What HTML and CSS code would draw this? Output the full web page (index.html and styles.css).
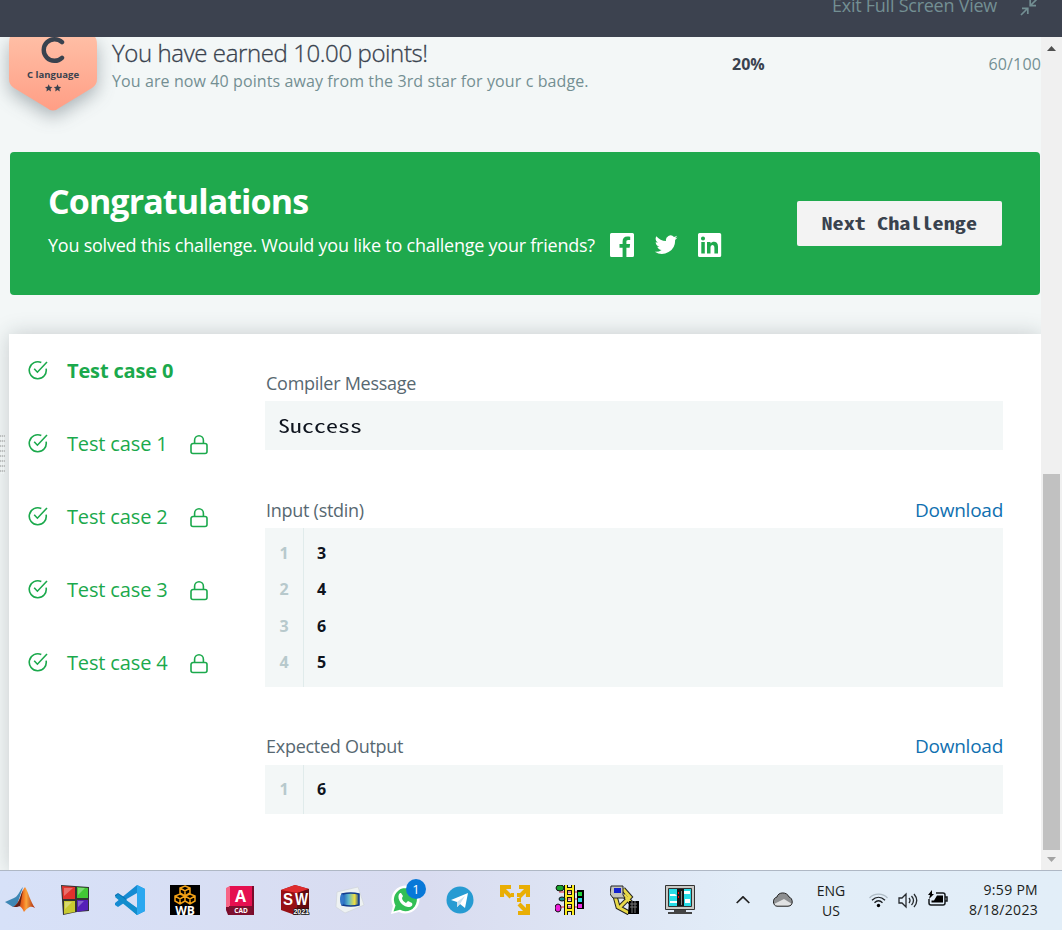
FILE: index.html
```html
<!DOCTYPE html>
<html lang="en">
<head>
<meta charset="utf-8">
<title>Challenge results</title>
<link rel="stylesheet" href="styles.css">
</head>
<body>
<svg class="defs" width="0" height="0">
  <symbol id="check" viewBox="0 0 20 20"><path d="M18.1 8.600A8.500 8.500 0 1 1 13.300 2.500M6.200 8.800l3.200 3.400L19 2" fill="none" stroke="currentColor" stroke-width="1.600"/></symbol>
  <symbol id="lock" viewBox="0 0 18 20"><path d="M4.600 8.500V5.200a4.400 4.400 0 0 1 8.800 0v3.300M3 8.500h12a2 2 0 0 1 2 2v6a2 2 0 0 1-2 2H3a2 2 0 0 1-2-2v-6a2 2 0 0 1 2-2z" fill="none" stroke="currentColor" stroke-width="1.600"/></symbol>
</svg>
<header class="topbar">
  <span class="exit">Exit Full Screen View</span>
  <svg class="shrink" width="18" height="18" viewBox="0 0 18 18"><path d="M1 17l6.500-6.500M2 10.300h5.800v5.800M17 1l-6.500 6.500M10.200 1.800v5.900H16" fill="none" stroke="currentColor" stroke-width="1.700"/></svg>
</header>
<div class="viewport">
  <div class="grip"></div>
  <main class="main">
    <section class="score">
      <svg class="badge" width="110" height="105" viewBox="0 0 110 105">
        <defs><linearGradient id="peach" x1="0" y1="0" x2="0" y2="1"><stop offset="0" stop-color="#ffbea5"/><stop offset="1" stop-color="#ff9e85"/></linearGradient></defs>
        <path class="shield" d="M10 0H95Q97 2 97 8V42Q97 48 92 51L59 71Q53 76 47 71L14 51Q9 48 9 42V8Q9 2 10 0Z" fill="url(#peach)"/>
        <path d="M62 5.200A10.800 10.800 0 1 0 62 20.800" fill="none" stroke="#39424e" stroke-width="4.400" stroke-linecap="round"/>
        <text x="53" y="41" text-anchor="middle" textLength="52" class="badge-name">C language</text>
        <path id="star" d="M48.700 47.300l1.100 2.400 2.600.3-1.900 1.800.5 2.600-2.300-1.300-2.300 1.300.5-2.600-1.900-1.800 2.600-.3z" fill="#39424e"/>
        <use href="#star" x="8.800"/>
      </svg>
      <div class="earned"><h2>You have earned 10.00 points!</h2><p>You are now 40 points away from the 3rd star for your c badge.</p></div>
      <b class="percent">20%</b>
      <span class="total">60/100</span>
    </section>
    <section class="banner">
      <div>
        <h1>Congratulations</h1>
        <div class="share">
          <p>You solved this challenge. Would you like to challenge your friends?</p>
          <svg width="24" height="24" viewBox="0 0 24 24"><path fill="#fff" d="M1.500 0h21A1.500 1.500 0 0 1 24 1.500v21a1.500 1.500 0 0 1-1.500 1.500H16.400V14.700h3.200l.5-3.700h-3.700V8.700c0-1.100.3-1.800 1.800-1.800h2V3.700c-.4-.1-1.500-.2-2.900-.2-2.900 0-4.700 1.700-4.700 4.900V11H9.500v3.700h3.100V24H1.500A1.500 1.500 0 0 1 0 22.500v-21A1.500 1.500 0 0 1 1.500 0z"/></svg>
          <svg width="24" height="24" viewBox="0 0 24 24"><path fill="#fff" d="M23.500 4.600c-.8.4-1.700.6-2.600.7.900-.6 1.700-1.500 2-2.500-.9.500-1.900.9-2.900 1.100a4.700 4.700 0 0 0-8 4.200A13.200 13.200 0 0 1 2.400 3.300a4.700 4.700 0 0 0 1.400 6.200c-.7 0-1.500-.2-2.100-.6a4.700 4.700 0 0 0 3.700 4.700c-.7.2-1.400.2-2.100.1a4.700 4.700 0 0 0 4.300 3.200A9.300 9.300 0 0 1 .8 18.800a13.200 13.200 0 0 0 20.300-11.800c.9-.6 1.700-1.500 2.400-2.400z"/></svg>
          <svg width="24" height="24" viewBox="0 0 24 24"><path fill="#fff" fill-rule="evenodd" d="M1.600 0h20q1.600 0 1.600 1.600v20.800q0 1.600-1.600 1.600h-20Q0 24 0 22.400V1.600Q0 0 1.600 0zM3.300 9v11.400h3.500V9zM5 3.400a2 2 0 1 0 0 4.100 2 2 0 0 0 0-4.100zM9 9v11.400h3.500v-5.700c0-3.600 3.900-3.800 3.900 0v5.700H20v-7c0-5.500-5.600-5.700-7.500-2.800V9z"/></svg>
        </div>
      </div>
      <button class="next"><span>Next Challenge</span></button>
    </section>
    <section class="panel">
      <nav class="cases">
        <div class="case active"><svg width="20" height="20"><use href="#check"/></svg><span>Test case 0</span></div>
        <div class="case"><svg width="20" height="20"><use href="#check"/></svg><span>Test case 1</span><svg width="18" height="20"><use href="#lock"/></svg></div>
        <div class="case"><svg width="20" height="20"><use href="#check"/></svg><span>Test case 2</span><svg width="18" height="20"><use href="#lock"/></svg></div>
        <div class="case"><svg width="20" height="20"><use href="#check"/></svg><span>Test case 3</span><svg width="18" height="20"><use href="#lock"/></svg></div>
        <div class="case"><svg width="20" height="20"><use href="#check"/></svg><span>Test case 4</span><svg width="18" height="20"><use href="#lock"/></svg></div>
      </nav>
      <div class="results">
        <div class="label"><span>Compiler Message</span></div>
        <div class="message"><span>Success</span></div>
        <div class="label"><span>Input (stdin)</span><a>Download</a></div>
        <div class="code four"><div class="nums"><i>1</i><i>2</i><i>3</i><i>4</i></div><div class="vals"><b>3</b><b>4</b><b>6</b><b>5</b></div></div>
        <div class="label expected"><span>Expected Output</span><a>Download</a></div>
        <div class="code one"><div class="nums"><i>1</i></div><div class="vals"><b>6</b></div></div>
      </div>
    </section>
  </main>
  <aside class="scroll">
    <svg width="9" height="5" viewBox="0 0 9 5"><path d="M0 5L4.500 0 9 5z" fill="#505050"/></svg>
    <div class="thumb"></div>
    <svg width="9" height="5" viewBox="0 0 9 5"><path d="M0 0L4.500 5 9 0z" fill="#a3a3a3"/></svg>
  </aside>
</div>
<footer class="taskbar">
  <div class="apps">
    <svg viewBox="0 0 30 30"><defs><linearGradient id="ml"><stop offset="0" stop-color="#7c1d12"/><stop offset=".45" stop-color="#ee6b1d"/><stop offset=".6" stop-color="#f9a53e"/><stop offset="1" stop-color="#a9230e"/></linearGradient></defs><path d="M0 17l9-4c4-1 6-8 9-11L12 20l-4 2z" fill="#3e87b5"/><path d="M8 22c7-3 8-16 12-20 3 4 5 14 10 21-4-2-6-2-11 4-2-5-5-8-11-5z" fill="url(#ml)"/><path d="M8 22c7-3 7-11 10-17l-3 16-3 1z" fill="#652018"/></svg>
    <svg viewBox="0 0 30 30"><path d="M1 0l14 1 14 1v24l-12 1-14 3z" fill="#333"/><path d="M2 1l13 1v12H3z" fill="#e0322c"/><path d="M17 2l11 1v10H17z" fill="#42c934"/><path d="M4 16h11v11l-11 2z" fill="#c8c932"/><path d="M17 15h11v10l-11 2z" fill="#5420b8"/><path d="M4 3h9l-9 8zM18 3h7l-7 7zM5 17h7l-7 7zM18 16h6l-6 6z" fill="#fff" opacity=".3"/></svg>
    <svg viewBox="0 0 30 30"><path d="M22 0l8 4v22l-8 4L9 18l-6 4-3-2v-2l22-18v8L10 15l12 8z" fill="#168bd2"/><path d="M22 0l8 4v22l-8 4z" fill="#2ba8f0"/><path d="M0 10l3-2 6 4 3 3-4 3-8-7z" fill="#0871b5"/><path d="M0 12l3-3 19 14v7z" fill="#128dcc"/></svg>
    <svg viewBox="0 0 30 30"><path d="M0 0h30v30H0z"/><path d="M15 1l5 2v5l-5 3-5-3V3zM10 3l5 3 5-3M15 6v5M10 9l5 2v5l-5 3-5-3v-5zM5 11l5 3 5-3M10 14v5M20 9l5 2v5l-5 3-5-3v-5zM15 11l5 3 5-3M20 14v5" fill="none" stroke="#f2a116" stroke-width="1.500"/><text x="15" y="29.700" text-anchor="middle" class="wb">WB</text></svg>
    <svg viewBox="0 0 30 30"><path d="M5 1h24v29H3l-2-5V4z" fill="#7a0b2a"/><path d="M1 3l4-2v21H1z" fill="#f76586"/><path d="M5 1h22v20H5z" fill="#e51050"/><path d="M4 21h23v9H4z" fill="#7d102f"/><text x="15.500" y="17" text-anchor="middle" class="acad-a">A</text><text x="16" y="28" text-anchor="middle" class="acad-c">CAD</text></svg>
    <svg viewBox="0 0 30 30"><path d="M1 5l14-5 14 4v20l-14 6-14-5z" fill="#971015"/><path d="M1 5l14-5 14 4-12 4z" fill="#df2c2e"/><path d="M17 8l12-4v20l-12 6z" fill="#620b10"/><text x="3" y="20" textLength="10" lengthAdjust="spacingAndGlyphs" class="sw">S</text><text x="15" y="20" textLength="13" lengthAdjust="spacingAndGlyphs" class="sw">W</text><text x="29" y="28.500" text-anchor="end" class="year">2021</text></svg>
    <svg viewBox="0 0 30 30"><defs><linearGradient id="cs"><stop offset="0" stop-color="#1453bd"/><stop offset=".4" stop-color="#63bcc8"/><stop offset=".75" stop-color="#f2df3e"/><stop offset="1" stop-color="#174c9b"/></linearGradient></defs><path d="M2 7L23 2l6 18-19 8-9-6z" fill="#eef2f3" stroke="#ccd2d5" stroke-width=".6"/><path d="M7 9q9-2 17 0v11q-8 2-17 0z" fill="url(#cs)" stroke="#123c8c" stroke-width="1.500"/><ellipse cx="7" cy="14.500" rx="2" ry="5.500" fill="#3579c9"/></svg>
    <div class="whats"><svg viewBox="0 0 30 30"><path d="M1 29l2-8A14 14 0 1 1 9 27z" fill="#fff"/><path d="M3.500 26.500l2-6A11.500 11.500 0 1 1 10 24.800z" fill="#32bf55"/><path d="M10 8c-4 3 0 13 8 14 4 0 5-2 4-4l-4-2-2 2c-2-1-4-3-4-5l1-2-2-3z" fill="#fff"/></svg><span>1</span></div>
    <svg viewBox="0 0 30 30"><circle cx="15" cy="15" r="13.500" fill="#279bd2"/><path d="M6 15l17-7-3 15-5-4-3 3v-5z" fill="#fff"/><path d="M12 17l8-6-5 8-3 3z" fill="#cce1ee"/></svg>
    <svg viewBox="0 0 30 30"><path d="M11 2H2v10M2 3l9 9M19 2h9v10M28 3l-9 9M28 19v9H18M28 28l-9-9" fill="none" stroke="#e9ae05" stroke-width="4.200"/><path d="M11 10h3M17 10h3M19 13v4" stroke="#e9ae05" stroke-width="4"/></svg>
    <svg viewBox="0 0 30 30"><path d="M4 7h20M8 14h16M5 22h20" stroke="#e0202e"/><path d="M11 0v30M18 0v30M11 4h8M11 11h8M11 18h8M11 25h8" stroke="#111" stroke-width="4"/><path d="M11 0v30M18 0v30M11 4h8M11 11h8M11 18h8M11 25h8" stroke="#fdec20" stroke-width="2"/><ellipse cx="5" cy="3" rx="4" ry="3" fill="#16a42c" stroke="#111"/><ellipse cx="7" cy="14" rx="3" ry="2" fill="#13918e" stroke="#111"/><ellipse cx="3" cy="23" rx="3" ry="4" fill="#ed1fdc" stroke="#111"/><path d="M22 5h7v19h-7z"/><path d="M23 7h4v4h-4z" fill="#20d238"/><path d="M23 13h4v4h-4z" fill="#29dee5"/><path d="M23 19h4v4h-4z" fill="#ec2be4"/></svg>
    <svg viewBox="0 0 30 30"><path d="M5 11L8 22l11 6M13 4l7 8-10 10M14 10l8 9" fill="none" stroke="#222" stroke-width="5"/><path d="M5 11L8 22l11 6M13 4l7 8-10 10M14 10l8 9" fill="none" stroke="#e8d949" stroke-width="3"/><path d="M1 1h12v9l2 3H3L0 9z" fill="#c4c4bd" stroke="#222"/><path d="M4 3h7v5H4z" fill="#1421d0"/><path d="M19 16h10v13H18z"/><path d="M20 19h7M20 22h7M22 16v12M25 16v12" stroke="#777"/></svg>
    <svg viewBox="0 0 30 30"><path d="M.5.500h29v24H.5z" fill="#c9c9c5" stroke="#333"/><path d="M3.500 3.500h23v18h-23z" fill="#27dce6" stroke="#333"/><path d="M5 9h5l2 2H5zM18 6h7v3h-7zM5 16h7v2H5zM20 14h5v4h-5z" fill="#fff"/><path d="M12 4h7v17h-7z" fill="#151515"/><path d="M13 8h1M13 12h1" stroke="red" stroke-width="2"/><path d="M16 6h1v14h-1z" fill="#888"/><path d="M9 25h12v2h6v2H3v-2h6z" fill="#444"/></svg>
  </div>
  <div class="tray">
    <svg width="14" height="9" viewBox="0 0 14 9"><path d="M.7 7L7 .8 13.300 7" fill="none" stroke="#222" stroke-width="1.700"/></svg>
    <svg width="20" height="15" viewBox="0 0 20 15"><path d="M4 5C5-.3 14-.5 16 5c4 1 5 9-1 9.200H4C-.5 14-1 6 4 5z" fill="#8d8f91"/><path d="M1 12l10-5 8 5q-2 2-4 2.200H4Q2 14 1 12z" fill="#e1e2e3"/><path d="M4 5C5-.3 14-.5 16 5c4 1 5 9-1 9.200H4C-.5 14-1 6 4 5z" fill="none" stroke="#222"/></svg>
    <div class="lang">ENG<br>US</div>
    <svg width="19" height="15" viewBox="0 0 19 15"><path d="M.5 5C5-.3 14-.3 18.500 5" fill="none" stroke="#aebbc5" stroke-width="1.200"/><path d="M3 7.300c4-4 9-4 13 0M5.500 9.700c2.500-2.400 5.500-2.400 8 0" fill="none" stroke="#1b1f23" stroke-width="1.300"/><circle cx="9.500" cy="12.500" r="1.700"/></svg>
    <svg width="20" height="17" viewBox="0 0 20 17"><path d="M1 6h3l4-4v13l-4-4H1zM11 6q2 2.500 0 5M13.500 4q4 4.500 0 9M16 2q5.500 6.500 0 13" fill="none" stroke="#25292d" stroke-width="1.300"/></svg>
    <svg width="20" height="17" viewBox="0 0 20 17"><path d="M8 3h7q2 0 2 2v8q0 2-2 2H3q-2 0-2-2V9M17.500 7H19v4h-1.500" fill="none" stroke="#161a1d" stroke-width="1.500"/><path d="M9 5.500h6v7H3.500V10.500H6zM4 0L0 5h2l-1 4 5-5H4z"/></svg>
    <div class="clock"><span>9:59 PM</span><span>8/18/2023</span></div>
  </div>
</footer>
</body>
</html>
```

FILE: styles.css
```css
* { box-sizing: border-box; }
body { margin: 0; width: 1062px; height: 930px; overflow: hidden; display: flex; flex-direction: column; font-family: "Open Sans", "Noto Sans", sans-serif; background: #f3f7f7; }
h1, h2, p { margin: 0; white-space: nowrap; }
svg { display: block; flex: none; }
.defs { display: none; }
.topbar { height: 37px; flex: none; background: #3c424f; color: #738f93; display: flex; justify-content: flex-end; gap: 23px; padding: 0 24px 0 0; overflow: hidden; }
.exit { font-size: 18px; line-height: 24px; margin-top: -7px; letter-spacing: -.25px; }
.shrink { margin-top: -2px; }
.viewport { height: 833px; display: flex; position: relative; overflow: hidden; }
.grip { position: absolute; left: 0; top: 398px; width: 5px; height: 39px; background: repeating-linear-gradient(90deg, transparent 0 1px, rgba(243, 247, 247, .6) 1px 2px), repeating-linear-gradient(#bcbfbf 0 2px, transparent 2px 5px); }
.main { width: 1041px; height: 833px; padding-left: 9px; display: flex; flex-direction: column; }
.score { height: 115px; display: flex; flex: none; position: relative; }
.badge { margin-left: -9px; overflow: visible; }
.shield { filter: drop-shadow(0 6px 9px rgba(50, 65, 75, .38)); }
.badge-name { font-size: 9.5px; font-weight: 700; fill: #39424e; }
.earned { padding: 0 0 0 2px; width: 622px; }
.earned h2 { font-size: 24px; line-height: 31px; font-weight: 300; color: #39424e; -webkit-text-stroke: .3px #39424e; letter-spacing: -.4px; }
.earned p { font-size: 16px; line-height: 24px; margin-top: 1px; color: #738f93; letter-spacing: .1px; }
.percent { width: 200px; font-size: 16px; line-height: 24px; padding-top: 15px; color: #39424e; }
.total { margin-left: auto; font-size: 16px; line-height: 24px; padding-top: 15px; color: #738f93; letter-spacing: .15px; }
.banner { width: 1030px; height: 143px; flex: none; margin-left: 1px; background: #1fa94d; border-radius: 4px; padding: 27px 38px; color: #fff; display: flex; justify-content: space-between; }
.banner h1 { font-size: 34px; line-height: 44px; font-weight: 700; letter-spacing: -.9px; }
.share { display: flex; align-items: center; gap: 20px; margin-top: 8px; }
.share p { font-size: 18px; line-height: 28px; width: 542px; letter-spacing: -.24px; }
.next { width: 205px; height: 45px; margin-top: 22px; border: 0; border-radius: 2px; padding: 0; background: #f3f3f3; color: #39424e; font: bold 17.5px/42px "Noto Sans Mono CJK SC", "DejaVu Sans Mono", monospace; }
.next span { display: inline-block; transform: translateY(-1px) scaleX(1.27); }
.panel { height: 536px; flex: none; margin-top: 39px; background: #fff; box-shadow: 0 0 20px rgba(40, 55, 65, .22); display: flex; }
.cases { width: 256px; padding: 0 0 0 19px; color: #1ba94c; }
.case { height: 73px; display: flex; align-items: center; font-size: 20px; letter-spacing: -.15px; }
.case span { width: 101px; margin: 0 22px 0 19px; white-space: nowrap; }
.case svg:last-child { margin-top: 3px; }
.case svg:first-child { margin-top: -2px; }
.active { font-weight: 700; }
.results { width: 738px; padding-top: 32px; }
.label { height: 35px; display: flex; justify-content: space-between; font-size: 18px; line-height: 34px; color: #576871; padding-left: 1px; letter-spacing: -.27px; }
.label a { color: #1070b0; font-size: 19px; letter-spacing: -.25px; }
.expected { line-height: 32px; }
.message { height: 49px; margin-bottom: 43px; background: #f3f7f7; padding-left: 13px; line-height: 49px; font-family: "Noto Sans Mono CJK SC", "DejaVu Sans Mono", monospace; font-size: 18px; color: #0e141e; }
.message span { display: inline-block; transform: scaleX(1.333); transform-origin: 0 50%; }
.code { height: 49px; background: #f3f7f7; display: flex; line-height: 36.4px; font-size: 16px; padding: 0; }
.four { height: 159px; margin-bottom: 43px; }
.nums { width: 39px; border-right: 1px solid #e0ebeb; padding-top: 7px; display: flex; flex-direction: column; text-align: center; }
.nums i { font-style: normal; font-weight: 700; color: #b7c9cc; }
.vals { padding: 7px 0 0 13px; display: flex; flex-direction: column; color: #0e141e; }
.one .nums, .one .vals { padding-top: 6px; }
.scroll { width: 21px; background: #f0f0f0; display: flex; flex-direction: column; align-items: center; padding: 9px 1px 0 1px; }
.thumb { width: 17px; height: 376px; margin: 423px 0 7px; background: #c1c1c1; }
.taskbar { height: 60px; flex: none; border-top: 1px solid #afb8c5; background: linear-gradient(90deg, #d7e1f8, #d9dcf0 40%, #e2edf8 70%, #e2eef8); display: flex; }
.apps { display: flex; gap: 25px; padding: 14px 0 0 5px; }
.apps > svg, .whats, .whats svg { width: 30px; height: 30px; }
.whats { position: relative; }
.whats span { position: absolute; left: 16px; top: -6px; width: 20px; height: 20px; border-radius: 50%; background: #0878d8; color: #fff; text-align: center; font-size: 13px; line-height: 20px; }
.wb { font: bold 12px "Open Sans", sans-serif; fill: #fff; }
.acad-a { font: bold 16px "Open Sans", sans-serif; fill: #fff; }
.acad-c { font: bold 6.5px "Open Sans", sans-serif; fill: #fff; }
.sw { font: bold 17px "Liberation Sans", sans-serif; fill: #fff; }
.year { font: bold 7px "Liberation Sans", sans-serif; fill: #fff; stroke: #111; stroke-width: 1.5px; paint-order: stroke; }
.tray { flex: 1; display: flex; align-items: center; padding-left: 41px; color: #1b1d20; font-size: 14px; line-height: 20px; }
.tray > svg:nth-child(2) { margin: -2px 0 0 23px; }
.lang { width: 36px; margin: 0 20px; text-align: center; font-size: 14px; }
.tray > svg:nth-child(5) { margin-left: 10px; }
.tray > svg:nth-child(6) { margin: -4px 0 0 10px; }
.clock { margin: -1px 24px 0 auto; display: flex; flex-direction: column; text-align: right; letter-spacing: .3px; }
```
